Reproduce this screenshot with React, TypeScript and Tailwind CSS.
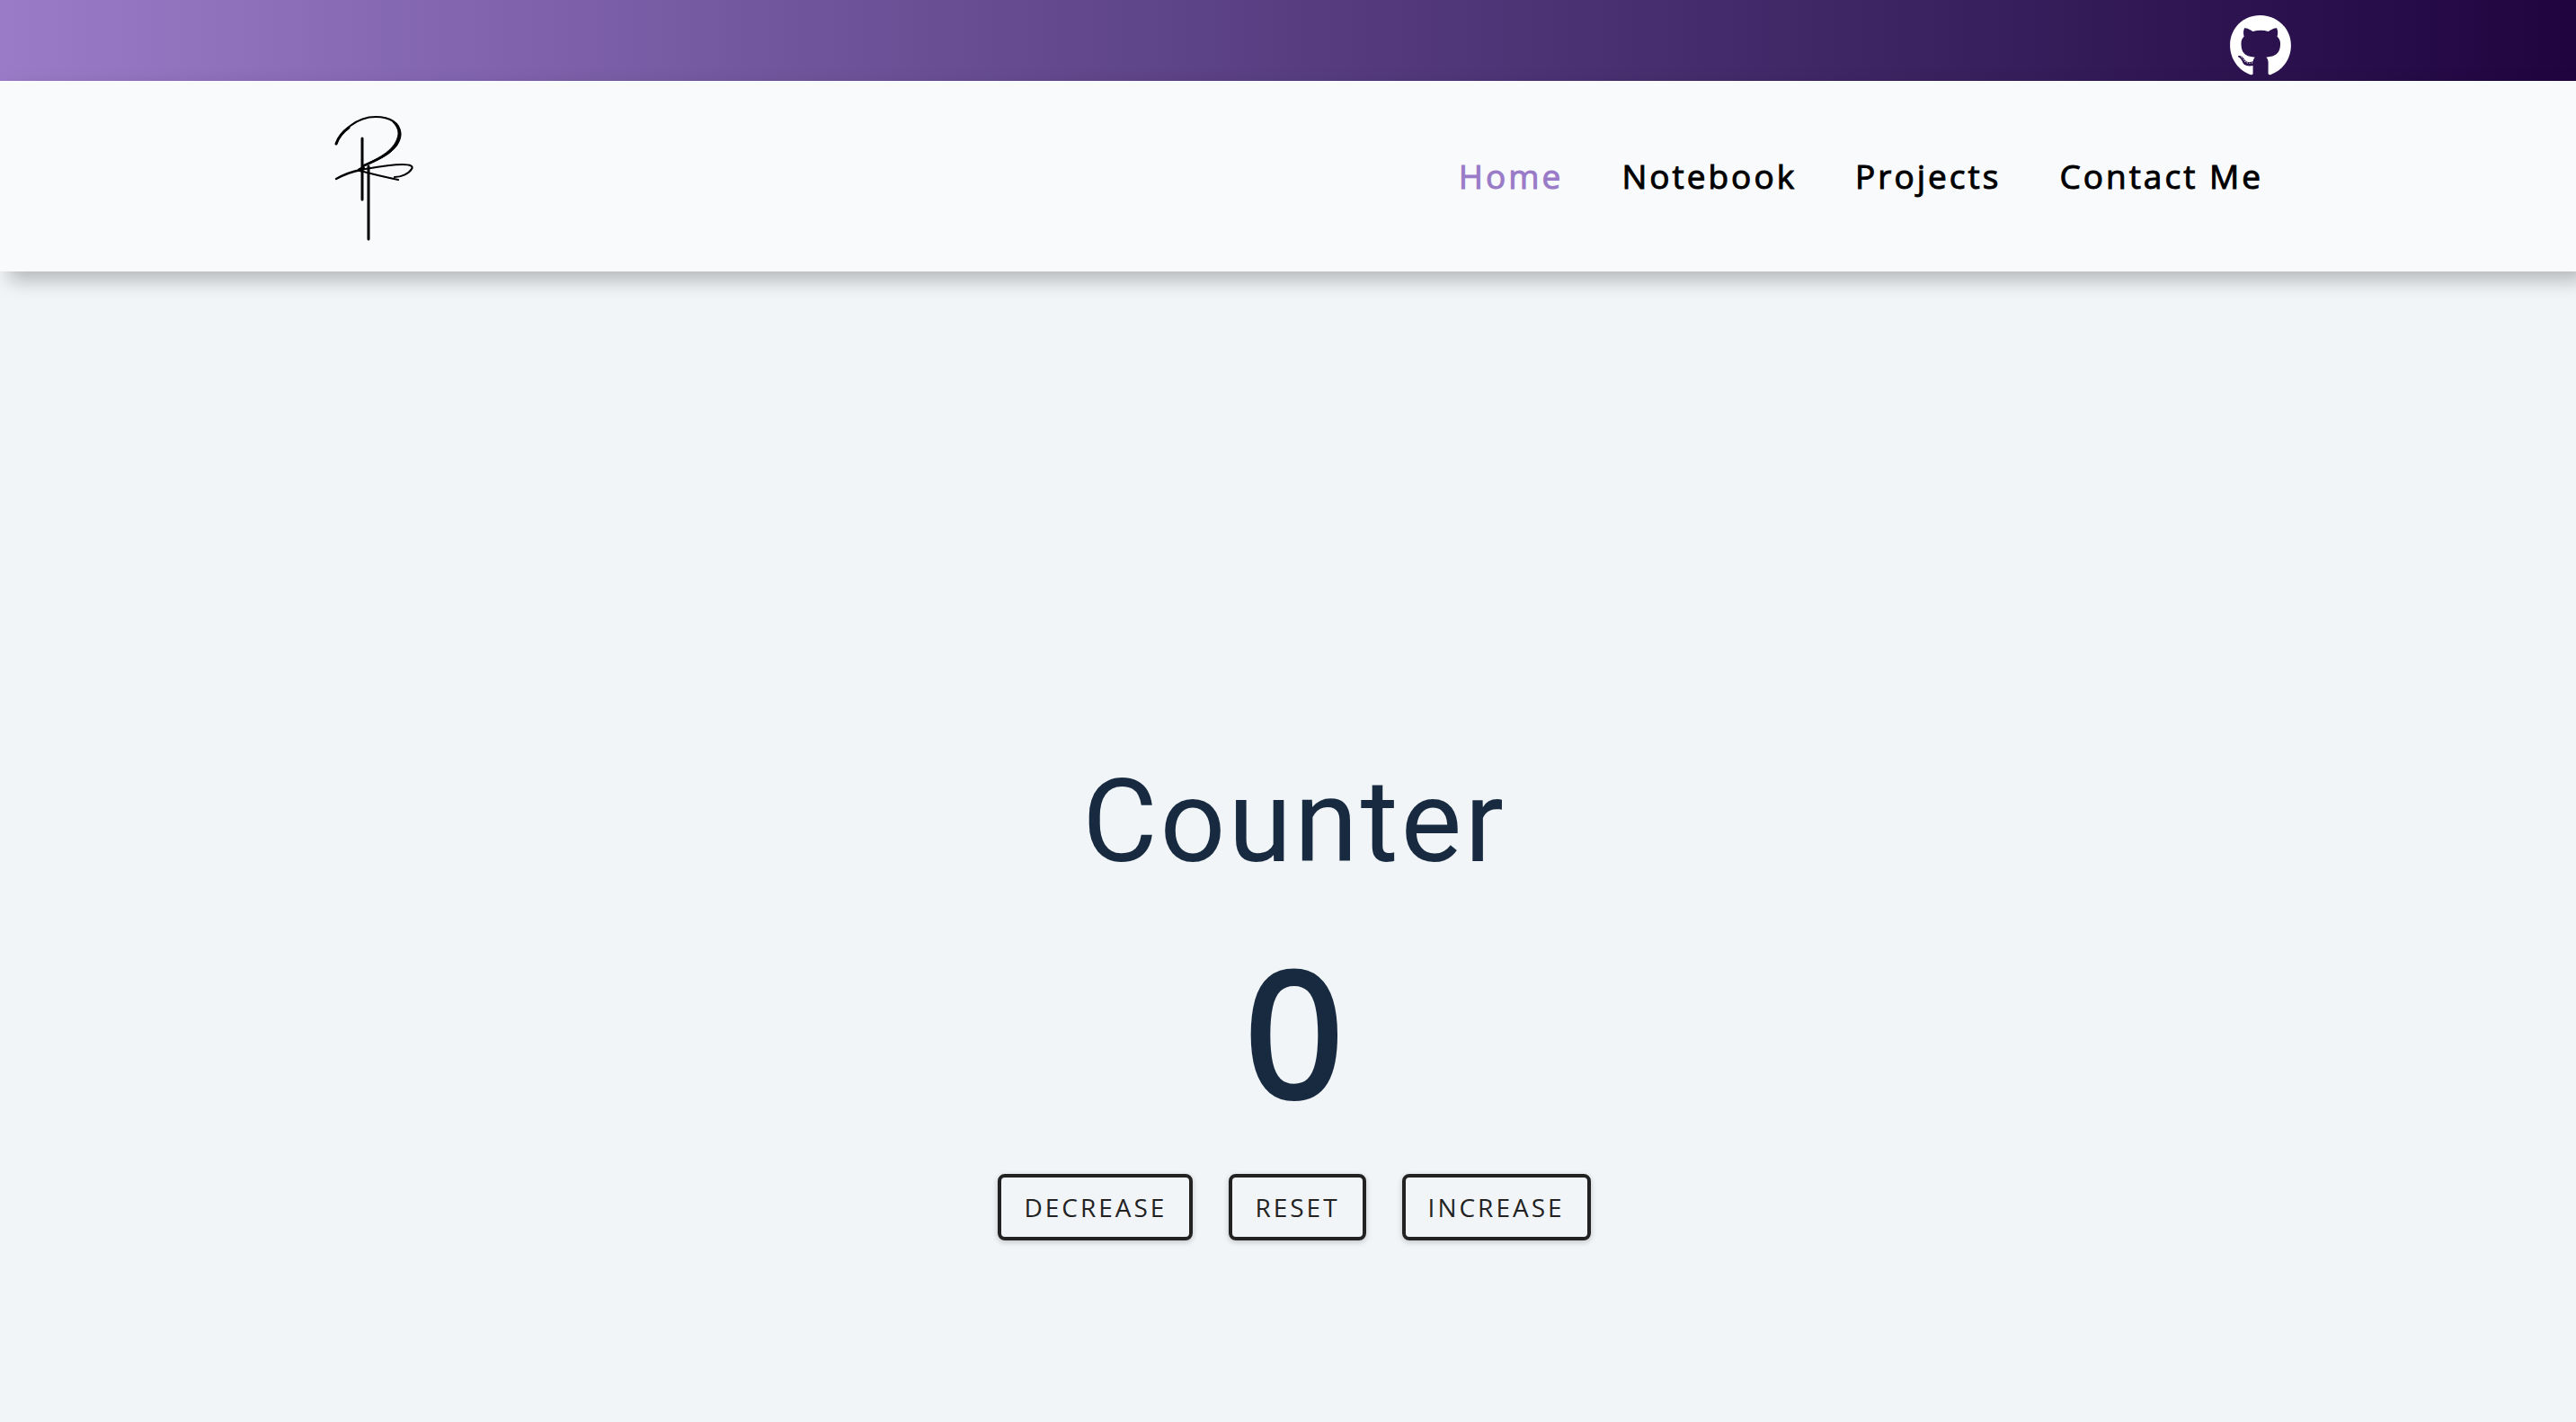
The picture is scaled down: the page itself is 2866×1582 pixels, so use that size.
import { useState } from "react";
import { FaGithub } from "react-icons/fa";

const links = ["Home", "Notebook", "Projects", "Contact Me"];

function Logo() {
  return (
    <svg viewBox="0 1 130 170" className="h-[170px] w-[130px]" fill="none" stroke="#000" strokeLinecap="round" role="img" aria-label="RP monogram">
      <path strokeWidth="2.2" d="M24 50 C30 36 46 20 68 20 C84 20 95 27 95 38 C95 58 72 67 53 75" />
      <path strokeWidth="3" d="M24 50 C26 44 31 37 38 32" />
      <path fill="#000" strokeWidth="0.8" d="M87 26 C93 30 97 35 96 41 C94 58 72 68 53 76 L53 74 C72 66 91 56 93 39 C93 34 91 30 87 26 Z" />
      <path strokeWidth="2.4" d="M24 89 C33 84 41 81 51 79" />
      <path strokeWidth="3" d="M53 44 V112 M60 75 V156" />
      <path strokeWidth="2.2" d="M51 79 C68 76 82 73 98 73 C107 73 110 75 108 78 C105 83 97 87 89 87 M50 80 C63 83 77 87 93 90" />
      <path strokeWidth="4" d="M50 79 L54 77" />
    </svg>
  );
}

export default function App() {
  const [count, setCount] = useState(0);
  const actions = [
    { label: "DECREASE", run: () => setCount(count - 1) },
    { label: "RESET", run: () => setCount(0) },
    { label: "INCREASE", run: () => setCount(count + 1) },
  ];
  return (
    <div className="flex min-h-screen flex-col bg-[#f1f5f8] font-['Open_Sans',sans-serif]">
      <div className="flex h-[90px] justify-end bg-linear-to-r from-[#9a7bc8] to-[#1f0440] px-[316px] pt-4">
        <a href="#github" aria-label="GitHub" className="size-[70px] text-white">
          <FaGithub className="size-[70px]" />
        </a>
      </div>
      <header className="relative flex items-center justify-between bg-[#f8fafc] py-[21px] pr-[348px] pl-[350px] shadow-[10px_10px_20px_rgba(0,0,0,0.25)]">
        <a href="#home"><Logo /></a>
        <nav className="flex gap-[65px] text-[37px] leading-[52px] tracking-[3px] text-black [-webkit-text-stroke:1px]">
          {links.map((l, i) => (
            <a key={l} href={"#" + l} className={i === 0 ? "text-[#9a7bc8]" : ""}>{l}</a>
          ))}
        </nav>
      </header>
      <main className="flex flex-1 flex-col items-center pt-[532px] pl-3.5 text-[#172a3f]">
        <h1 className="font-[Roboto,sans-serif] text-[128px] leading-[160px] tracking-[3px]">Counter</h1>
        <output className="mt-2 text-[192px] leading-[288px] [-webkit-text-stroke:6px]">{count}</output>
        <div className="mt-4 flex gap-10">
          {actions.map((a) => (
            <button key={a.label} type="button" onClick={a.run} className="rounded-lg border-4 border-[#222] px-[25px] py-3 text-[28px] leading-[42px] tracking-[3px] text-[#222] shadow-[0_2px_6px_rgba(0,0,0,0.2)]">
              {a.label}
            </button>
          ))}
        </div>
      </main>
    </div>
  );
}
